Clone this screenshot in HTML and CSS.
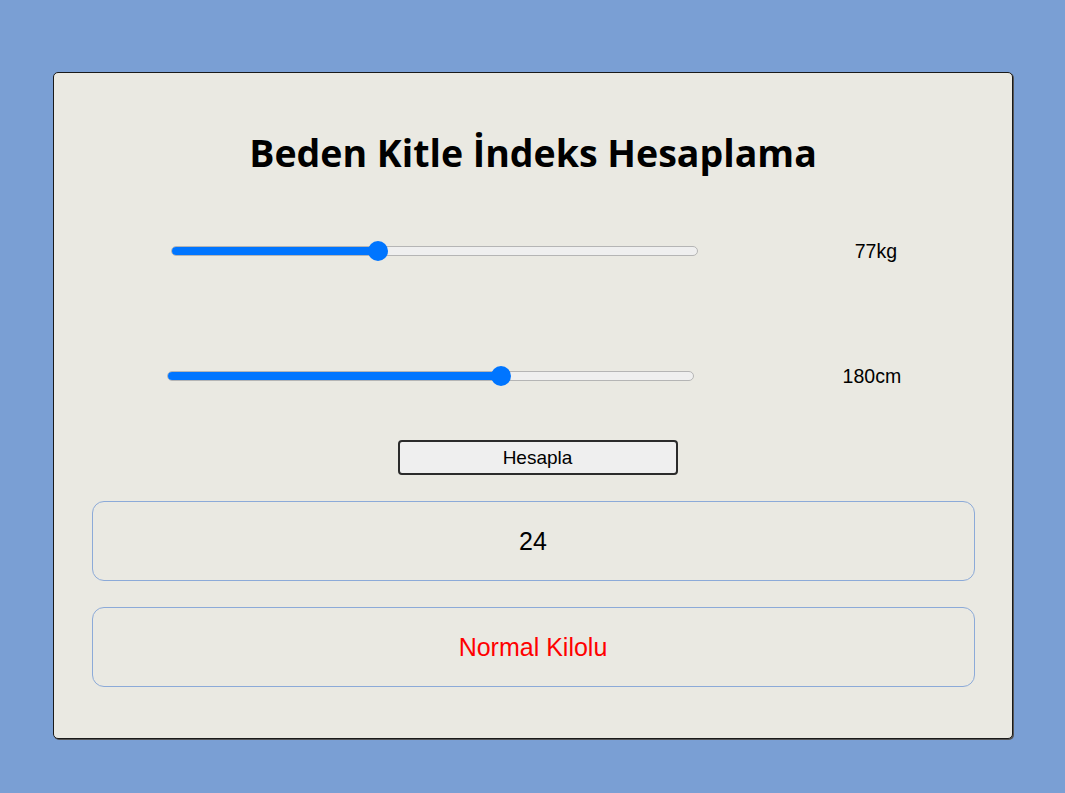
FILE: index.html
```html
<!DOCTYPE html>
<html lang="tr">
<head>
<meta charset="utf-8">
<title>Beden Kitle İndeks Hesaplama</title>
<link rel="stylesheet" href="styles.css">
</head>
<body>
<main class="card">
  <h1 class="title">Beden Kitle İndeks Hesaplama</h1>
  <div class="row row-weight">
    <div class="slider">
      <div class="track"><div class="fill" style="width:39.3%"></div></div>
      <span class="thumb" style="left:39.3%"></span>
    </div>
    <span class="value">77kg</span>
  </div>
  <div class="row row-height">
    <div class="slider">
      <div class="track"><div class="fill" style="width:63.4%"></div></div>
      <span class="thumb" style="left:63.4%"></span>
    </div>
    <span class="value">180cm</span>
  </div>
  <div class="actions">
    <button class="btn" type="button">Hesapla</button>
  </div>
  <div class="result">24</div>
  <div class="result result-status">Normal Kilolu</div>
</main>
</body>
</html>
```

FILE: styles.css
```css
* { box-sizing: border-box; }

body {
  margin: 0;
  background: #7a9fd4;
  font-family: "Liberation Sans", Arial, sans-serif;
  min-height: 793px;
  padding-top: 72px;
}

.card {
  width: 960px;
  margin: 0 auto;
  background: #eae9e2;
  border: 1px solid #1a1a1a;
  border-radius: 5px;
  box-shadow: 1px 1px 0 #555;
  padding: 0 37px 51px 38px;
}

.title {
  margin: 0;
  padding-top: 58px;
  height: 168px;
  text-align: center;
  font-family: "Open Sans", "Noto Sans", sans-serif;
  font-weight: 700;
  font-size: 37.5px;
  line-height: 44px;
  color: #000;
}

.row {
  display: flex;
  justify-content: space-around;
  align-items: center;
  height: 20px;
}

.row-height { margin-top: 105px; }

.slider {
  position: relative;
  width: 527px;
  height: 20px;
  margin: 0 2px;
  padding: 5px 0;
}

.track {
  height: 10px;
  background: #efefef;
  border: 1px solid #b5b5b5;
  border-radius: 5px;
  overflow: hidden;
}

.fill {
  height: 10px;
  margin: -1px 0 0 -1px;
  background: #0075ff;
  border-radius: 5px 0 0 5px;
}

.thumb {
  position: absolute;
  top: 0;
  width: 20px;
  height: 20px;
  margin-left: -10px;
  border-radius: 50%;
  background: #0075ff;
}

.value {
  font-size: 19.5px;
  color: #000;
}

.actions {
  display: flex;
  justify-content: center;
  padding-left: 9px;
  margin-top: 54px;
}

.btn {
  width: 280px;
  height: 35px;
  background: #efefef;
  border: 2px solid #2b2b2b;
  border-radius: 4px;
  font-family: "Liberation Sans", Arial, sans-serif;
  font-size: 19px;
  color: #000;
  padding: 0;
}

.result {
  margin-top: 26px;
  height: 80px;
  border: 1px solid #8caad8;
  border-radius: 12px;
  display: flex;
  align-items: center;
  justify-content: center;
  font-size: 25px;
  color: #000;
}

.result-status { color: #ff0000; }
```
